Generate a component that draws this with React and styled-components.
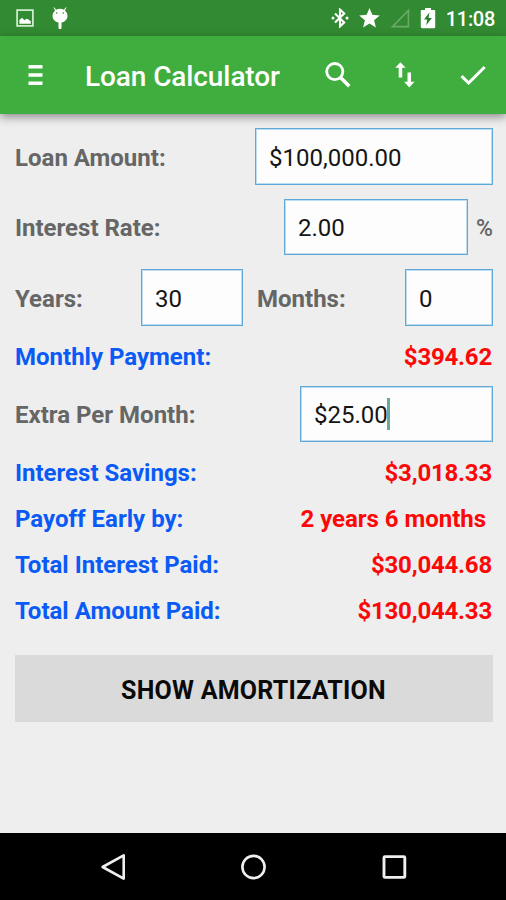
import React from 'react';
import styled, { createGlobalStyle } from 'styled-components';

const GlobalStyle = createGlobalStyle`
  * { box-sizing: border-box; }
  body { margin: 0; background: #eee; font-family: Roboto, "Liberation Sans", sans-serif; }
`;

const Screen = styled.div`
  display: flex;
  flex-direction: column;
  width: 506px;
  height: 900px;
  background: #eeeeee;
  overflow: hidden;
`;

const StatusBar = styled.header`
  display: flex;
  align-items: center;
  flex: none;
  height: 36px;
  padding: 0 11px 0 16px;
  background: #328a32;
  color: #fff;
`;

const StatusGroup = styled.div`
  display: flex;
  align-items: center;
  gap: ${(p) => p.$gap}px;
`;

const Spacer = styled.div`
  flex: 1;
`;

const Clock = styled.time`
  font-size: 20px;
  font-weight: 500;
  line-height: 34px;
  letter-spacing: -0.3px;
  padding-top: 2px;
`;

const Toolbar = styled.div`
  display: flex;
  align-items: center;
  flex: none;
  height: 78px;
  padding: 0 20px 0 28px;
  background: #40ae3f;
  box-shadow: 0 3px 9px rgba(0, 0, 0, 0.42);
  color: #fff;
`;

const Title = styled.h1`
  flex: 1;
  margin: 0 0 0 42px;
  font-size: 28px;
  font-weight: 500;
  line-height: 36px;
  letter-spacing: -0.1px;
  padding-top: 4px;
  white-space: nowrap;
`;

const IconButton = styled.button`
  display: flex;
  margin: 0 0 0 ${(p) => p.$before || 0}px;
  padding: 0;
  border: 0;
  background: none;
  color: inherit;
`;

const Form = styled.main`
  flex: 1;
  display: flex;
  flex-direction: column;
  padding: 7px 13px 0 15px;
`;

const Row = styled.div`
  display: flex;
  align-items: center;
  justify-content: space-between;
  flex: none;
  height: ${(p) => p.$height}px;
`;

const Label = styled.label`
  color: ${(p) => (p.$result ? '#0a5af5' : '#666')};
  font-size: 24px;
  font-weight: 700;
  line-height: 30px;
  padding-top: 2px;
  white-space: nowrap;
`;

const Value = styled.output`
  color: #fc0808;
  font-size: 24px;
  font-weight: 700;
  line-height: 30px;
  letter-spacing: ${(p) => p.$track ?? -0.2}px;
  padding-top: 2px;
  padding-right: ${(p) => p.$inset || 1}px;
  white-space: nowrap;
`;

const Field = styled.div`
  display: flex;
  align-items: center;
  width: ${(p) => p.$width}px;
  height: ${(p) => p.$height || 57}px;
  margin-left: ${(p) => (p.$push ? 'auto' : 0)};
  padding: 2px 0 0 13px;
  border: 1px solid #5fa8d8;
  outline: 1px solid #bcdcf0;
  outline-offset: -2px;
  background: #fdfdfd;
  color: #151515;
  font-size: 24px;
  line-height: 30px;
`;

const Caret = styled.span`
  width: 3px;
  height: 32px;
  margin: -3px 0 0 -1px;
  background: #68aa96;
`;

const Percent = styled.span`
  width: 17px;
  margin-left: 8px;
  padding-top: 2px;
  color: #666;
  font-size: 23px;
  font-weight: 500;
  letter-spacing: -0.5px;
`;

const Period = styled.div`
  display: flex;
  align-items: center;
  justify-content: space-between;
  width: ${(p) => p.$width}px;
`;

const ShowButton = styled.button`
  flex: none;
  height: 67px;
  margin: 22px 0 0;
  padding: 3px 1px 0 0;
  border: 0;
  background: #dadada;
  color: #0a0a0a;
  font-family: inherit;
  font-size: 25px;
  font-weight: 700;
  letter-spacing: 0.25px;
`;

const NavBar = styled.nav`
  display: flex;
  align-items: center;
  justify-content: space-between;
  flex: none;
  height: 67px;
  padding: 0 99px 0 100px;
  background: #000;
  color: #efefef;
`;

const PictureIcon = () => (
  <svg width="18" height="18" viewBox="0 0 18 18">
    <rect x="1.1" y="1.1" width="15.8" height="15.8" fill="none" stroke="#d5f0d2" strokeWidth="1.7" />
    <path d="M3.4 14.8V11l2.7-2.3 2.3 2.5 2-1.5 1.6.5 2.8 2v2.6z" fill="#fff" />
  </svg>
);

const DroidIcon = () => (
  <svg width="18" height="22" viewBox="0 0 18 22">
    <path d="M3.2.3l1.9 2.5A8 8 0 0 1 9 1.8c1.4 0 2.7.3 3.9 1L14.8.3l.7.5-1.6 2.7a7 7 0 0 1 2.6 5.2c0 3.6-2.6 6-6 6.8v5.2a1.5 1.5 0 0 1-3 0v-5.2c-3.4-.8-6-3.2-6-6.8a7 7 0 0 1 2.6-5.2L2.5.8z" fill="#fff" />
    <circle cx="5.8" cy="6" r=".8" fill="#328a32" />
    <circle cx="12.2" cy="6" r=".8" fill="#328a32" />
  </svg>
);

const BluetoothIcon = () => (
  <svg width="18" height="20" viewBox="0 0 18 20" fill="none" stroke="#fff" strokeWidth="2.1">
    <path d="M4 5.4l9.2 9-4.2 4V1.6l4.2 4-9.2 9" />
    <circle cx="2" cy="10" r="1.5" fill="#fff" stroke="none" />
    <circle cx="16" cy="10" r="1.5" fill="#fff" stroke="none" />
  </svg>
);

const StarIcon = () => (
  <svg width="21" height="20" viewBox="0.5 0 21 20">
    <path d="M11 0l2.8 6.8 7.5.6-5.7 4.8 1.8 7.2-6.4-3.9-6.4 3.9 1.8-7.2L.7 7.4l7.5-.6z" fill="#fff" />
  </svg>
);

const SignalIcon = () => (
  <svg width="20" height="20" viewBox="0 0 20 20">
    <path d="M2.4 18.6H18.4V2.4z" fill="none" stroke="#6aab69" strokeWidth="1.6" />
  </svg>
);

const BatteryIcon = () => (
  <svg width="16" height="21" viewBox="0 0 16 21">
    <path d="M5 0h6v2h3.2c.7 0 1 .4 1 1v16c0 .8-.4 1.2-1 1.2H2c-.8 0-1.2-.4-1.2-1.2V3c0-.6.4-1 1.2-1h3z" fill="#fff" />
    <path d="M9.4 4.5L4 11.6h3.2l-1 5.7 5.7-7.4H8.6z" fill="#287e2b" />
  </svg>
);

const MenuIcon = () => (
  <svg width="15" height="22" viewBox="0 0 15 22">
    <path d="M.5 1h14v3.4H.5zM.5 9.3h14v3.4H.5zM.5 17.6h14V21H.5z" fill="#fff" />
  </svg>
);

const SearchIcon = () => (
  <svg width="26" height="26" viewBox="0 0 26 26" fill="none" stroke="#fff">
    <circle cx="9.8" cy="9.6" r="8.1" strokeWidth="2.8" />
    <path d="M15 15l9.3 9.3" strokeWidth="3.6" />
  </svg>
);

const SwapIcon = () => (
  <svg width="20" height="26" viewBox="0 0 20 26" fill="#fff">
    <path d="M5.4.2l5.2 5.5H7.2v9.8H3.7V5.7H.3z" />
    <path d="M12.5 10.6H16v9.2h3.5l-5.2 5.7-5.2-5.7h3.4z" />
  </svg>
);

const CheckIcon = () => (
  <svg width="26" height="20" viewBox="0 0 26 20" fill="none" stroke="#fff" strokeWidth="3">
    <path d="M1.6 11.2l7 6.8L24.7 2" />
  </svg>
);

const BackIcon = () => (
  <svg width="26" height="28" viewBox="0 0 26 28" fill="none" stroke="currentColor" strokeWidth="2.6" strokeLinejoin="round">
    <path d="M23.7 2.3v23.3L2.6 14z" />
  </svg>
);

const HomeIcon = () => (
  <svg width="26" height="26" viewBox="0 0 26 26" fill="none" stroke="currentColor" strokeWidth="2.6">
    <circle cx="12.5" cy="13" r="11.1" />
  </svg>
);

const RecentsIcon = () => (
  <svg width="26" height="26" viewBox="0 0 26 26" fill="none" stroke="currentColor" strokeWidth="2.9">
    <rect x="3" y="2.6" width="20.8" height="20.8" rx="1" />
  </svg>
);

export default function App() {
  return (
    <>
      <GlobalStyle />
      <Screen>
        <StatusBar>
          <StatusGroup $gap={17}>
            <PictureIcon />
            <DroidIcon />
          </StatusGroup>
          <Spacer />
          <StatusGroup $gap={10}>
            <BluetoothIcon />
            <StarIcon />
            <SignalIcon />
            <BatteryIcon />
            <Clock>11:08</Clock>
          </StatusGroup>
        </StatusBar>
        <Toolbar>
          <IconButton aria-label="Menu"><MenuIcon /></IconButton>
          <Title>Loan Calculator</Title>
          <IconButton aria-label="Search"><SearchIcon /></IconButton>
          <IconButton aria-label="Swap" $before={44}><SwapIcon /></IconButton>
          <IconButton aria-label="Done" $before={45}><CheckIcon /></IconButton>
        </Toolbar>
        <Form>
          <Row $height={71}>
            <Label>Loan Amount:</Label>
            <Field $width={238}>$100,000.00</Field>
          </Row>
          <Row $height={70}>
            <Label>Interest Rate:</Label>
            <Field $width={184} $height={56} $push>2.00</Field>
            <Percent>%</Percent>
          </Row>
          <Row $height={71}>
            <Period $width={228}>
              <Label>Years:</Label>
              <Field $width={102}>30</Field>
            </Period>
            <Period $width={236}>
              <Label>Months:</Label>
              <Field $width={88}>0</Field>
            </Period>
          </Row>
          <Row $height={46}>
            <Label $result>Monthly Payment:</Label>
            <Value>$394.62</Value>
          </Row>
          <Row $height={70}>
            <Label>Extra Per Month:</Label>
            <Field $width={193} $height={56}>$25.00<Caret /></Field>
          </Row>
          <Row $height={46}>
            <Label $result>Interest Savings:</Label>
            <Value>$3,018.33</Value>
          </Row>
          <Row $height={46}>
            <Label $result>Payoff Early by:</Label>
            <Value $inset={7} $track={-0.03}>2 years 6 months</Value>
          </Row>
          <Row $height={46}>
            <Label $result>Total Interest Paid:</Label>
            <Value>$30,044.68</Value>
          </Row>
          <Row $height={46}>
            <Label $result>Total Amount Paid:</Label>
            <Value>$130,044.33</Value>
          </Row>
          <ShowButton>SHOW AMORTIZATION</ShowButton>
        </Form>
        <NavBar>
          <IconButton aria-label="Back"><BackIcon /></IconButton>
          <IconButton aria-label="Home"><HomeIcon /></IconButton>
          <IconButton aria-label="Recent apps"><RecentsIcon /></IconButton>
        </NavBar>
      </Screen>
    </>
  );
}
